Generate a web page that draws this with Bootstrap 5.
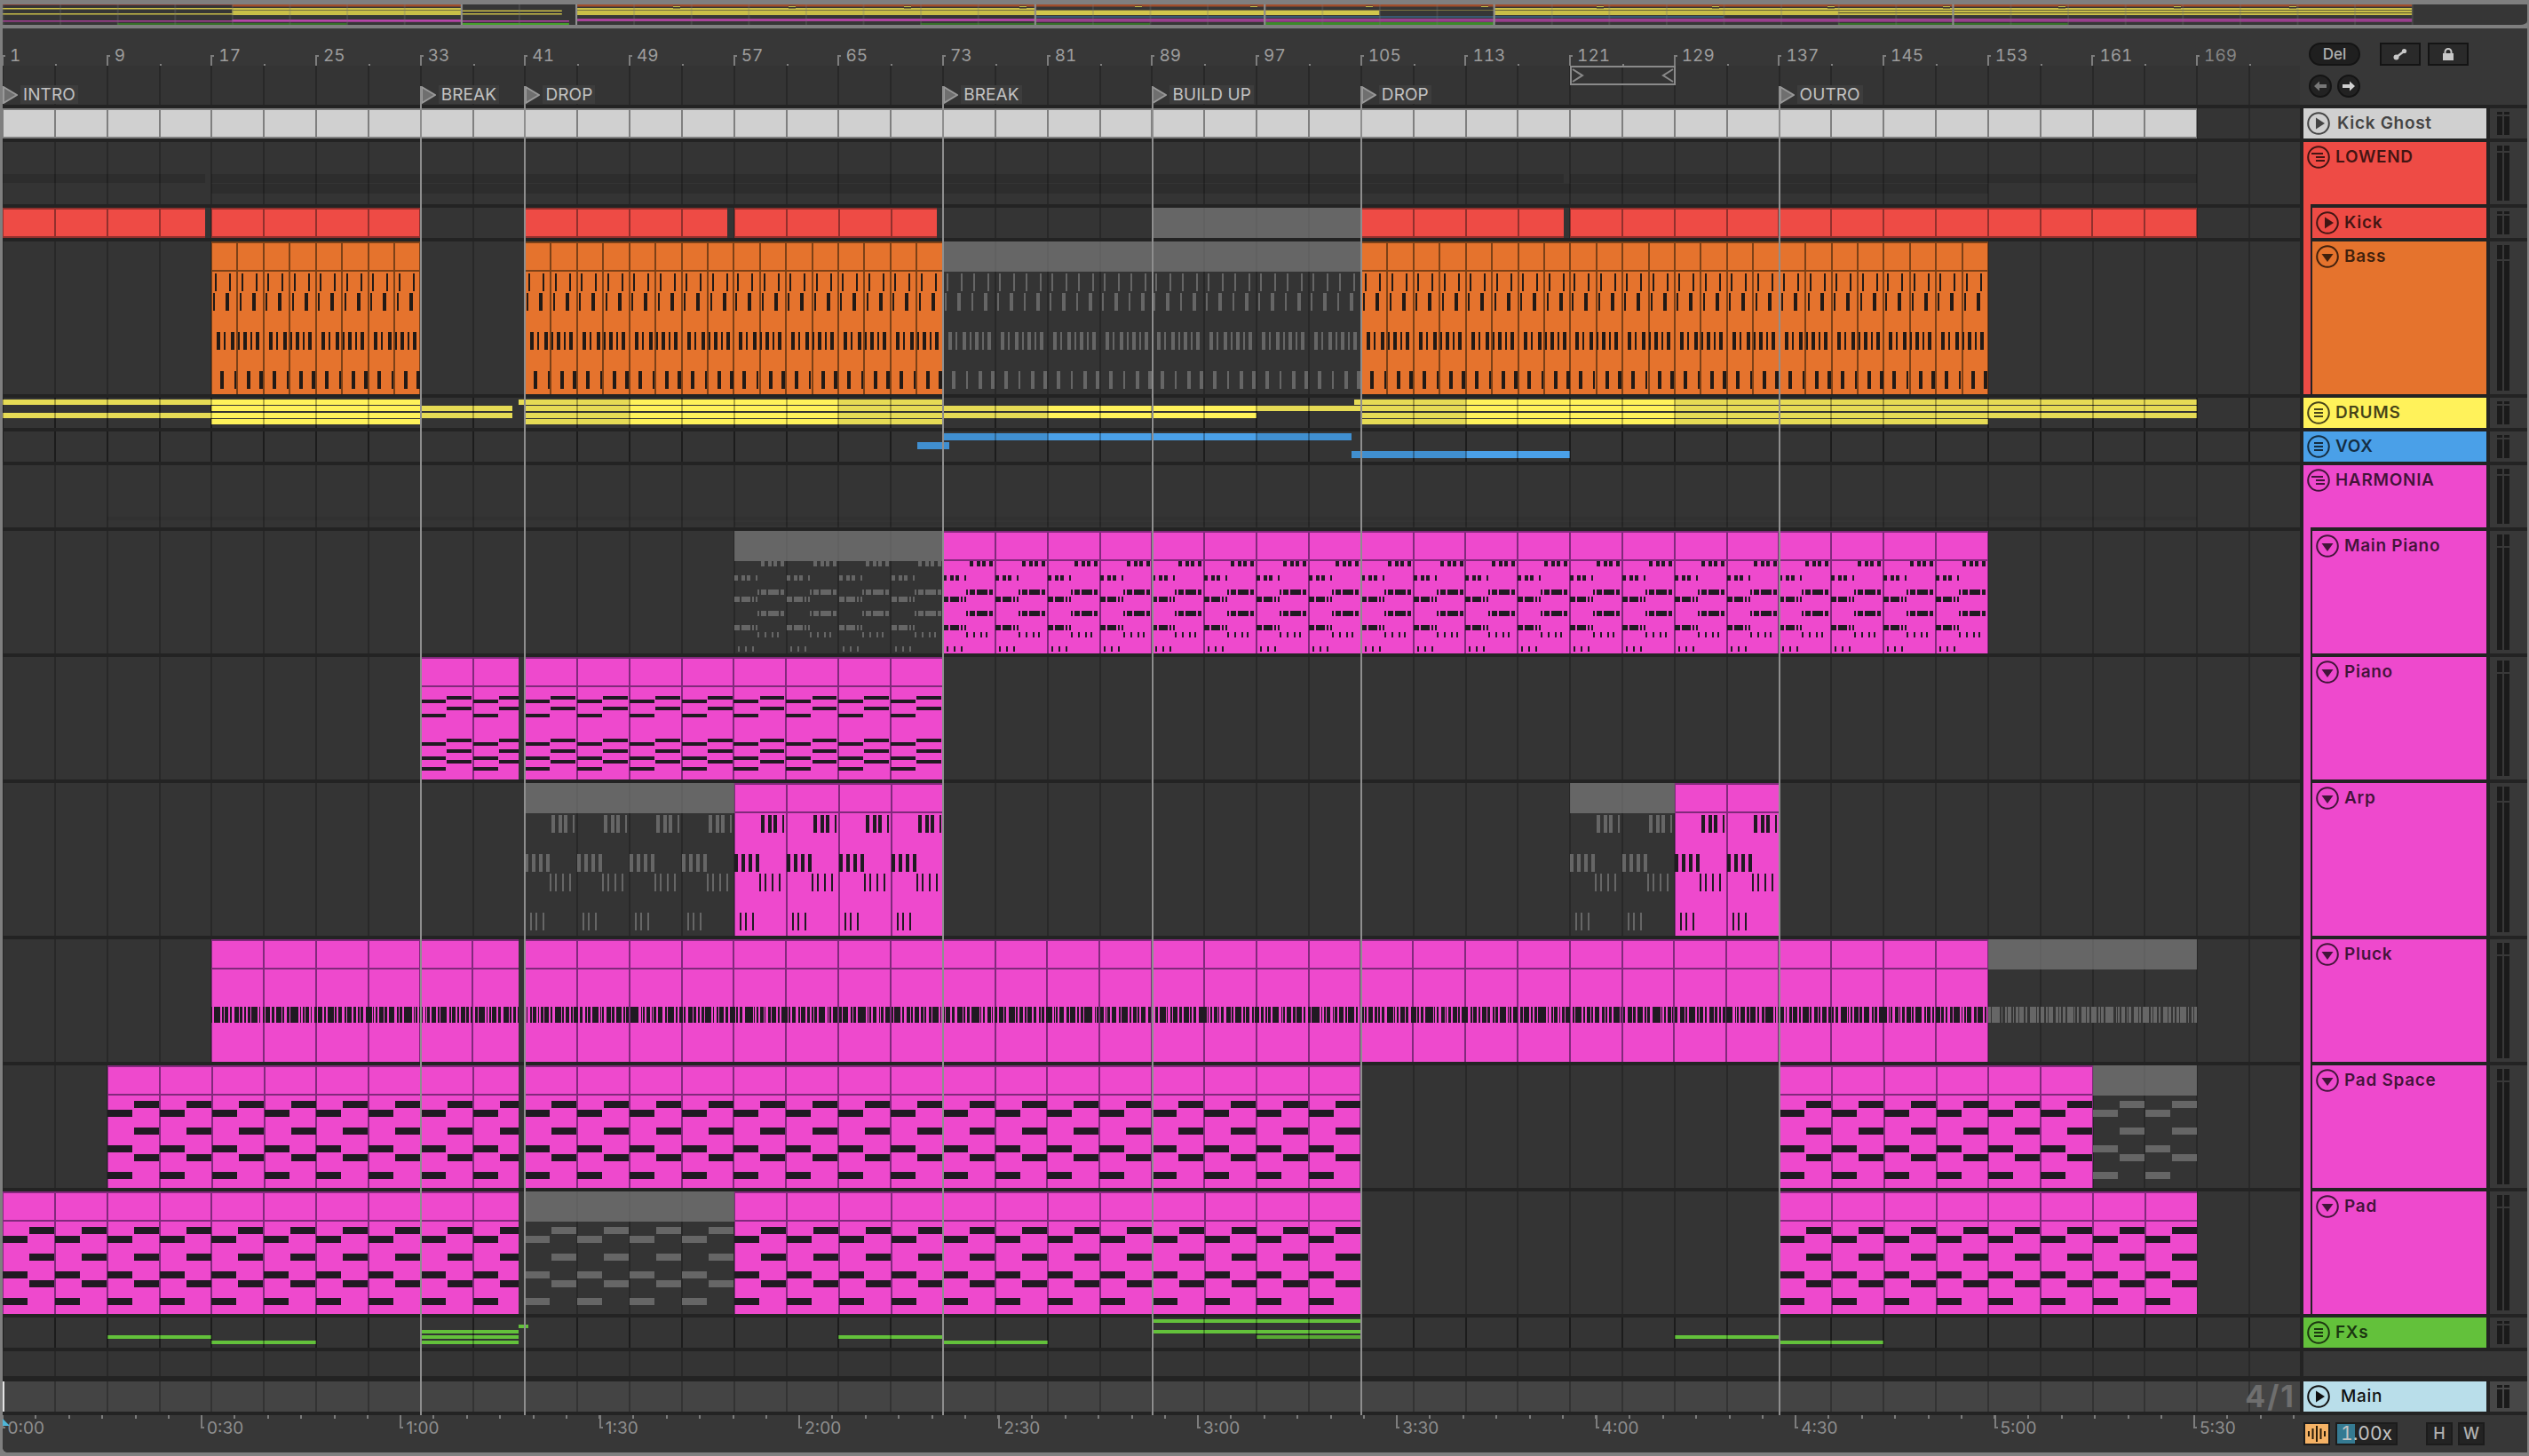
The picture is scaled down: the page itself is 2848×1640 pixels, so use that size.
<!DOCTYPE html>
<html lang="en">
<head>
<meta charset="utf-8">
<title>Arrangement</title>
<link href="https://cdn.jsdelivr.net/npm/bootstrap@5.3.0/dist/css/bootstrap.min.css" rel="stylesheet">
<style>
html,body{margin:0;background:#7f7f7f;overflow:hidden}
body{font-family:Inter,"Liberation Sans",sans-serif}
.shell{width:2848px;height:1640px;padding:5px 2px 4px 3px;background:#7f7f7f;overflow:hidden}
.ovw{height:27px;background:#363636;border-bottom:4px solid #7f7f7f;border-bottom-right-radius:8px;overflow:hidden}
.ovw svg{display:block}
.work{height:1604px;background:#232323;position:relative;border-bottom-left-radius:6px;overflow:hidden}
.tops{height:86px;background:#373737}
.leftcol{width:2587px;flex:none}
.rul{height:42px;overflow:hidden}
.rc{width:117.68px;flex:none;height:42px;color:#9d9d9d;font-size:19px;line-height:22px;font-variant-numeric:tabular-nums;background:linear-gradient(#808080,#808080) 58.84px 40px/2px 2px no-repeat}
.rc.dim{color:#858585}
.rt{display:block;width:4px;height:12px;border-left:2px solid #7d7d7d;border-top:2px solid #7d7d7d;margin-right:5px;margin-left:-1px;flex:none}
.mrk{height:44px;background-color:#343434;background-image:repeating-linear-gradient(90deg,#282828 -1px,#282828 1px,transparent 1px,transparent 57.84px);display:grid;grid-template-columns:var(--cols);grid-template-rows:22px 22px}
.mkr{grid-row:2;grid-column-end:span 50;justify-self:start;align-items:flex-start;white-space:nowrap}
.mkr svg{flex:none;display:block;margin-top:1px}
.mkl{margin-left:3px;padding:0 3px;height:21px;line-height:21px;background:#3d3d3d;color:#c2c2c2;font-size:19px;letter-spacing:.1px}
.brc{grid-row:1;display:block}
.ctl{padding:16px 0 0 10px}
.btn.pill{width:58px;height:26px;padding:0;border:2px solid #141414;border-radius:13px;background:#1f1f1f;color:#b0b0b0;font-size:17px;line-height:21px;font-weight:500}
.btn.sq{width:46px;height:26px;padding:0;border:2px solid #141414;border-radius:0;background:#2a2a2a;color:#ccc;line-height:0}
.btn.rnd{width:26px;height:26px;padding:0;border:2px solid #141414;border-radius:13px;background:#222;line-height:0}
.lane{width:2587px;flex:none;position:relative;background-color:#343434;background-image:repeating-linear-gradient(90deg,#282828 -1px,#282828 1px,transparent 1px,transparent 57.84px);display:grid;grid-template-columns:var(--cols);grid-template-rows:100%;overflow:hidden}
.lane-main{background-color:#444;background-image:repeating-linear-gradient(90deg,#333 -1px,#333 1px,transparent 1px,transparent 57.84px);box-shadow:inset 2px 0 0 #e4e4e4}
.lane-mix::after{content:"";position:absolute;inset:0;background-image:repeating-linear-gradient(90deg,rgba(0,0,0,.3) -1px,rgba(0,0,0,.3) 1px,transparent 1px,transparent 57.84px);pointer-events:none}
.clp{grid-row:1;height:100%;min-width:0;overflow:hidden;background-color:var(--f);background-image:repeating-linear-gradient(90deg,var(--l) calc(var(--x) - 1px),var(--l) calc(var(--x) + 1px),transparent calc(var(--x) + 1px),transparent calc(var(--x) - 1px + var(--p)))}
.clp svg{display:block}
.cap{height:34px;border-top:2px solid var(--l);border-bottom:2px solid var(--l)}
.k-pink{--f:#ee49cd;--l:#82297c;--n:#201a22}
.k-orange{--f:#e5732d;--l:#7c4117;--n:#221a16}
.k-red{--f:#ee4b45;--l:#92302d;--n:#222}
.k-white{--f:#d0d0d0;--l:#7f7f7f;--n:#222}
.k-gray{--f:transparent;--l:transparent;--n:#666}
.k-gray .cap{background:rgba(138,138,138,.586);border:0}
.bnd{grid-row:1;align-self:start;background:rgba(0,0,0,.13)}
.bnd2{background:rgba(0,0,0,.05)}
.nt{grid-row:1;align-self:start}
.y1{background:#fff25a}.y0{background:#e6db55}
.b1{background:#4aa0e8}.b0{background:#408fd0}
.g1{background:#63c13b}.g0{background:#58a834}
.hd{width:206px;flex:none;position:relative;color:rgba(0,0,0,.72);background:var(--c)}
.hl{height:34px;padding-left:4px}
.hd svg{width:26px;height:26px;flex:none;display:block}
.tn{font-size:19px;font-weight:600;letter-spacing:.7px;margin-left:6px;white-space:nowrap}
.hdc{background:linear-gradient(90deg,var(--pc) 8px,#232323 8px,#232323 10px,var(--c) 10px)}
.hdc::before{content:"";position:absolute;left:0;top:-4px;width:8px;height:4px;background:var(--pc)}
.hdc .hl{padding-left:14px}
.c-red{--c:#ee4b45}.c-orange{--c:#e5732d}.c-yellow{--c:#fff25a}.c-blue{--c:#4aa0e8}.c-pink{--c:#ee49cd}.c-green{--c:#63c13b}.c-light{--c:#d0d0d0}.c-main{--c:#b9deea}
.c-light{color:#444}.c-main{color:#111}
.p-red{--pc:#ee4b45}.p-pink{--pc:#ee49cd}
.mtr{width:42px;flex:none;background:#383838;padding:4px 20px 4px 8px;gap:2px}
.mtr-main{background:#474747}
.mb{flex:1 1 0;gap:2px}
.mb i{display:block;background:#1a1a1a;height:10%}
.mb b{display:block;background:#1a1a1a;flex:1 1 0}
.r34{height:34px}.r70{height:70px}.r172{height:172px}.r138{height:138px}.r28{height:28px}
.emp{width:252px;flex:none;background:#373737}
.gap6{margin-top:2px}
.lcl{position:absolute;top:65px;height:1497px;width:2px;background:#8e8e8e;z-index:3}
.sigl{position:absolute;right:5px;top:0;height:34px;line-height:34px;font-size:34px;letter-spacing:2px;font-weight:700;color:#6e6e6e;z-index:2}
.btm{height:42px;background:#373737}
.tcell{width:224.4px;flex:none;height:42px;color:#8e8e8e;font-size:19px;line-height:23px;background:repeating-linear-gradient(90deg,#7d7d7d 0,#7d7d7d 2px,transparent 2px,transparent 37.4px) 0 0/100% 4px no-repeat}
.tcell.endc{width:117.6px}
.tl{display:block;width:4px;height:15px;border-left:2px solid #7d7d7d;border-bottom:2px solid #7d7d7d;margin-right:3px;flex:none}
.ttxt{padding-top:3px}
.tclip{overflow:hidden;position:relative;margin-left:-1.4px;width:2588.4px}
.phd{position:absolute;left:1px;top:4px;width:0;height:0;border-left:8px solid #4fb6d8;border-top:8px solid transparent}
.ctr{padding:8px 0 0 4px;gap:6px}
.obtn{width:30px;height:26px;background:#f5b265;border:2px solid #1c1c1c;color:#2a1c08}
.spd{width:70px;height:26px;border:2px solid #1c1c1c;background:linear-gradient(90deg,#357a92 20px,#232323 20px);color:#c4c4c4;font-size:21px;line-height:22px;text-align:center;font-variant-numeric:tabular-nums}
.hw{width:30px;height:26px;border:2px solid #1c1c1c;background:#232323;color:#b0b0b0;font-size:18px;line-height:22px;text-align:center;font-weight:500}
</style>
</head>
<body>
<svg width="0" height="0" class="d-block" aria-hidden="true">
  <symbol id="ip" viewBox="0 0 26 26"><circle cx="13" cy="13" r="11.8" fill="none" stroke="currentColor" stroke-width="2"/><polygon points="10,6.5 20,13 10,19.5" fill="currentColor"/></symbol>
  <symbol id="id" viewBox="0 0 26 26"><circle cx="13" cy="13" r="11.8" fill="none" stroke="currentColor" stroke-width="2"/><polygon points="6.5,10 19.5,10 13,19" fill="currentColor"/></symbol>
  <symbol id="il" viewBox="0 0 26 26"><circle cx="13" cy="13" r="11.8" fill="none" stroke="currentColor" stroke-width="2"/><path d="M8 9h10M8 13h10M8 17h10" stroke="currentColor" stroke-width="2" fill="none"/></symbol>
  <symbol id="is" viewBox="0 0 26 26"><circle cx="13" cy="13" r="11.8" fill="none" stroke="currentColor" stroke-width="2"/><path d="M5 9h13M10 13h10M10 17h10" stroke="currentColor" stroke-width="2" fill="none"/></symbol>
</svg>
<div class="shell">
  <div class="ovw"><svg id="ov" width="2843" height="23"></svg></div>
  <div class="work">
    <div class="tops d-flex">
      <div class="leftcol">
        <div class="rul d-flex">
          <div class="rc d-flex align-items-end"><i class="rt"></i><span>1</span></div>
          <div class="rc d-flex align-items-end"><i class="rt"></i><span>9</span></div>
          <div class="rc d-flex align-items-end"><i class="rt"></i><span>17</span></div>
          <div class="rc d-flex align-items-end"><i class="rt"></i><span>25</span></div>
          <div class="rc d-flex align-items-end"><i class="rt"></i><span>33</span></div>
          <div class="rc d-flex align-items-end"><i class="rt"></i><span>41</span></div>
          <div class="rc d-flex align-items-end"><i class="rt"></i><span>49</span></div>
          <div class="rc d-flex align-items-end"><i class="rt"></i><span>57</span></div>
          <div class="rc d-flex align-items-end"><i class="rt"></i><span>65</span></div>
          <div class="rc d-flex align-items-end"><i class="rt"></i><span>73</span></div>
          <div class="rc d-flex align-items-end"><i class="rt"></i><span>81</span></div>
          <div class="rc d-flex align-items-end"><i class="rt"></i><span>89</span></div>
          <div class="rc d-flex align-items-end"><i class="rt"></i><span>97</span></div>
          <div class="rc d-flex align-items-end"><i class="rt"></i><span>105</span></div>
          <div class="rc d-flex align-items-end"><i class="rt"></i><span>113</span></div>
          <div class="rc d-flex align-items-end"><i class="rt"></i><span>121</span></div>
          <div class="rc d-flex align-items-end"><i class="rt"></i><span>129</span></div>
          <div class="rc d-flex align-items-end"><i class="rt"></i><span>137</span></div>
          <div class="rc d-flex align-items-end"><i class="rt"></i><span>145</span></div>
          <div class="rc d-flex align-items-end"><i class="rt"></i><span>153</span></div>
          <div class="rc d-flex align-items-end"><i class="rt"></i><span>161</span></div>
          <div class="rc dim d-flex align-items-end"><i class="rt"></i><span>169</span></div>
        </div>
        <div class="mrk" id="mrk">
          <div class="mkr d-flex" data-bar="1"><svg width="17" height="20"><polygon points="1,1 16,10 1,19" fill="#6f6f6f" stroke="#999" stroke-width="2"/></svg><span class="mkl">INTRO</span></div>
          <div class="mkr d-flex" data-bar="33"><svg width="17" height="20"><polygon points="1,1 16,10 1,19" fill="#6f6f6f" stroke="#999" stroke-width="2"/></svg><span class="mkl">BREAK</span></div>
          <div class="mkr d-flex" data-bar="41"><svg width="17" height="20"><polygon points="1,1 16,10 1,19" fill="#6f6f6f" stroke="#999" stroke-width="2"/></svg><span class="mkl">DROP</span></div>
          <div class="mkr d-flex" data-bar="73"><svg width="17" height="20"><polygon points="1,1 16,10 1,19" fill="#6f6f6f" stroke="#999" stroke-width="2"/></svg><span class="mkl">BREAK</span></div>
          <div class="mkr d-flex" data-bar="89"><svg width="17" height="20"><polygon points="1,1 16,10 1,19" fill="#6f6f6f" stroke="#999" stroke-width="2"/></svg><span class="mkl">BUILD UP</span></div>
          <div class="mkr d-flex" data-bar="105"><svg width="17" height="20"><polygon points="1,1 16,10 1,19" fill="#6f6f6f" stroke="#999" stroke-width="2"/></svg><span class="mkl">DROP</span></div>
          <div class="mkr d-flex" data-bar="137"><svg width="17" height="20"><polygon points="1,1 16,10 1,19" fill="#6f6f6f" stroke="#999" stroke-width="2"/></svg><span class="mkl">OUTRO</span></div>
          <svg class="brc" data-bar="121" width="119" height="22"><rect x="1" y="1" width="117" height="20" fill="none" stroke="#8a8a8a" stroke-width="2"/><path d="M3 4l11 7-11 7M116 4l-11 7 11 7" fill="none" stroke="#8a8a8a" stroke-width="2"/></svg>
        </div>
      </div>
      <div class="ctl">
        <div class="d-flex">
          <button class="btn pill" type="button">Del</button>
          <button class="btn sq" type="button" style="margin-left:22px"><svg width="18" height="16" viewBox="0 0 18 16"><path d="M5 11l8-6" stroke="#c8c8c8" stroke-width="2.5"/><circle cx="4.500" cy="11.500" r="3" fill="#c8c8c8"/><circle cx="13.500" cy="4.500" r="2.600" fill="#c8c8c8"/></svg></button>
          <button class="btn sq" type="button" style="margin-left:8px"><svg width="16" height="16" viewBox="0 0 16 16"><rect x="2" y="7" width="12" height="8" fill="#c8c8c8"/><path d="M4.500 7V5.500a3.500 3.500 0 0 1 7 0V7" fill="none" stroke="#c8c8c8" stroke-width="2"/></svg></button>
        </div>
        <div class="d-flex" style="margin-top:10px;gap:6px">
          <button class="btn rnd" type="button"><svg width="16" height="14" viewBox="0 0 16 14"><path d="M1 7l6-5.500V5h8v4H7v3.500z" fill="#777"/></svg></button>
          <button class="btn rnd" type="button"><svg width="16" height="14" viewBox="0 0 16 14"><path d="M15 7L9 1.500V5H1v4h8v3.500z" fill="#d0d0d0"/></svg></button>
        </div>
      </div>
    </div>

    <div class="d-flex flex-column gap-1 mt-1">
      <div class="d-flex gap-1 r34"><div class="lane" id="l-ghost"></div>
        <div class="hd c-light"><div class="hl d-flex align-items-center"><svg><use href="#ip"/></svg><span class="tn" style="margin-left:8px">Kick Ghost</span></div></div>
        <div class="mtr d-flex"><div class="mb d-flex flex-column"><i></i><b></b></div><div class="mb d-flex flex-column"><i></i><b></b></div></div></div>
      <div class="d-flex gap-1 r70"><div class="lane" id="l-lowend"></div>
        <div class="hd c-red"><div class="hl d-flex align-items-center"><svg><use href="#is"/></svg><span class="tn">LOWEND</span></div></div>
        <div class="mtr d-flex"><div class="mb d-flex flex-column"><i></i><b></b></div><div class="mb d-flex flex-column"><i></i><b></b></div></div></div>
      <div class="d-flex gap-1 r34"><div class="lane" id="l-kick"></div>
        <div class="hd hdc c-red p-red"><div class="hl d-flex align-items-center"><svg><use href="#ip"/></svg><span class="tn" style="margin-left:6px">Kick</span></div></div>
        <div class="mtr d-flex"><div class="mb d-flex flex-column"><i></i><b></b></div><div class="mb d-flex flex-column"><i></i><b></b></div></div></div>
      <div class="d-flex gap-1 r172"><div class="lane" id="l-bass"></div>
        <div class="hd hdc c-orange p-red"><div class="hl d-flex align-items-center"><svg><use href="#id"/></svg><span class="tn" style="margin-left:6px">Bass</span></div></div>
        <div class="mtr d-flex"><div class="mb d-flex flex-column"><i></i><b></b></div><div class="mb d-flex flex-column"><i></i><b></b></div></div></div>
      <div class="d-flex gap-1 r34"><div class="lane lane-mix" id="l-drums"></div>
        <div class="hd c-yellow"><div class="hl d-flex align-items-center"><svg><use href="#il"/></svg><span class="tn">DRUMS</span></div></div>
        <div class="mtr d-flex"><div class="mb d-flex flex-column"><i></i><b></b></div><div class="mb d-flex flex-column"><i></i><b></b></div></div></div>
      <div class="d-flex gap-1 r34"><div class="lane lane-mix" id="l-vox"></div>
        <div class="hd c-blue"><div class="hl d-flex align-items-center"><svg><use href="#il"/></svg><span class="tn">VOX</span></div></div>
        <div class="mtr d-flex"><div class="mb d-flex flex-column"><i></i><b></b></div><div class="mb d-flex flex-column"><i></i><b></b></div></div></div>
      <div class="d-flex gap-1 r70"><div class="lane" id="l-harm"></div>
        <div class="hd c-pink"><div class="hl d-flex align-items-center"><svg><use href="#is"/></svg><span class="tn">HARMONIA</span></div></div>
        <div class="mtr d-flex"><div class="mb d-flex flex-column"><i></i><b></b></div><div class="mb d-flex flex-column"><i></i><b></b></div></div></div>
      <div class="d-flex gap-1 r138"><div class="lane" id="l-mpiano"></div>
        <div class="hd hdc c-pink p-pink"><div class="hl d-flex align-items-center"><svg><use href="#id"/></svg><span class="tn" style="margin-left:6px">Main Piano</span></div></div>
        <div class="mtr d-flex"><div class="mb d-flex flex-column"><i></i><b></b></div><div class="mb d-flex flex-column"><i></i><b></b></div></div></div>
      <div class="d-flex gap-1 r138"><div class="lane" id="l-piano"></div>
        <div class="hd hdc c-pink p-pink"><div class="hl d-flex align-items-center"><svg><use href="#id"/></svg><span class="tn" style="margin-left:6px">Piano</span></div></div>
        <div class="mtr d-flex"><div class="mb d-flex flex-column"><i></i><b></b></div><div class="mb d-flex flex-column"><i></i><b></b></div></div></div>
      <div class="d-flex gap-1 r172"><div class="lane" id="l-arp"></div>
        <div class="hd hdc c-pink p-pink"><div class="hl d-flex align-items-center"><svg><use href="#id"/></svg><span class="tn" style="margin-left:6px">Arp</span></div></div>
        <div class="mtr d-flex"><div class="mb d-flex flex-column"><i></i><b></b></div><div class="mb d-flex flex-column"><i></i><b></b></div></div></div>
      <div class="d-flex gap-1 r138"><div class="lane" id="l-pluck"></div>
        <div class="hd hdc c-pink p-pink"><div class="hl d-flex align-items-center"><svg><use href="#id"/></svg><span class="tn" style="margin-left:6px">Pluck</span></div></div>
        <div class="mtr d-flex"><div class="mb d-flex flex-column"><i></i><b></b></div><div class="mb d-flex flex-column"><i></i><b></b></div></div></div>
      <div class="d-flex gap-1 r138"><div class="lane" id="l-pads"></div>
        <div class="hd hdc c-pink p-pink"><div class="hl d-flex align-items-center"><svg><use href="#id"/></svg><span class="tn" style="margin-left:6px">Pad Space</span></div></div>
        <div class="mtr d-flex"><div class="mb d-flex flex-column"><i></i><b></b></div><div class="mb d-flex flex-column"><i></i><b></b></div></div></div>
      <div class="d-flex gap-1 r138"><div class="lane" id="l-pad"></div>
        <div class="hd hdc c-pink p-pink"><div class="hl d-flex align-items-center"><svg><use href="#id"/></svg><span class="tn" style="margin-left:6px">Pad</span></div></div>
        <div class="mtr d-flex"><div class="mb d-flex flex-column"><i></i><b></b></div><div class="mb d-flex flex-column"><i></i><b></b></div></div></div>
      <div class="d-flex gap-1 r34"><div class="lane lane-mix" id="l-fx"></div>
        <div class="hd c-green"><div class="hl d-flex align-items-center"><svg><use href="#il"/></svg><span class="tn">FXs</span></div></div>
        <div class="mtr d-flex"><div class="mb d-flex flex-column"><i></i><b></b></div><div class="mb d-flex flex-column"><i></i><b></b></div></div></div>
      <div class="d-flex gap-1 r28"><div class="lane"></div><div class="emp"></div></div>
      <div class="d-flex gap-1 r34 gap6"><div class="lane lane-main"><span class="sigl">4/1</span></div>
        <div class="hd c-main"><div class="hl d-flex align-items-center"><svg><use href="#ip"/></svg><span class="tn" style="margin-left:12px;font-weight:500">Main</span></div></div>
        <div class="mtr mtr-main d-flex"><div class="mb d-flex flex-column"><i></i><b></b></div><div class="mb d-flex flex-column"><i></i><b></b></div></div></div>
    </div>

    <div class="btm d-flex mt-1">
      <div class="tclip d-flex flex-none">
        <i class="phd"></i>
        <div class="tcell d-flex"><i class="tl"></i><span class="ttxt">0:00</span></div>
        <div class="tcell d-flex"><i class="tl"></i><span class="ttxt">0:30</span></div>
        <div class="tcell d-flex"><i class="tl"></i><span class="ttxt">1:00</span></div>
        <div class="tcell d-flex"><i class="tl"></i><span class="ttxt">1:30</span></div>
        <div class="tcell d-flex"><i class="tl"></i><span class="ttxt">2:00</span></div>
        <div class="tcell d-flex"><i class="tl"></i><span class="ttxt">2:30</span></div>
        <div class="tcell d-flex"><i class="tl"></i><span class="ttxt">3:00</span></div>
        <div class="tcell d-flex"><i class="tl"></i><span class="ttxt">3:30</span></div>
        <div class="tcell d-flex"><i class="tl"></i><span class="ttxt">4:00</span></div>
        <div class="tcell d-flex"><i class="tl"></i><span class="ttxt">4:30</span></div>
        <div class="tcell d-flex"><i class="tl"></i><span class="ttxt">5:00</span></div>
        <div class="tcell endc d-flex"><i class="tl"></i><span class="ttxt">5:30</span></div>
      </div>
      <div class="ctr d-flex">
        <div class="obtn d-flex align-items-center justify-content-center"><svg width="22" height="20" viewBox="0 0 22 20"><path d="M2 7v6M6.500 4v12M11 1v18M15.500 4v12M20 7v6" stroke="currentColor" stroke-width="2" fill="none"/></svg></div>
        <div class="spd">1.00x</div>
        <div class="hw" style="margin-left:26px">H</div>
        <div class="hw">W</div>
      </div>
    </div>
    <div id="locs"></div>
  </div>
</div>
<script src="https://cdn.jsdelivr.net/npm/bootstrap@5.3.0/dist/js/bootstrap.bundle.min.js"></script>
<script>
var B=14.71,U=58.84;
/* grid tracks snapped to 1/64 px so that rounding does not accumulate along the timeline */
(function(){
  var a=[],prev=0;
  for(var i=1;i<=703;i++){var e=Math.round(i*B/4*64)/64;a.push((e-prev)+'px');prev=e}
  document.documentElement.style.setProperty('--cols',a.join(' '));
})();
function col(b){return Math.round((b-1)*4)+1}
function X(b){return (b-1)*B}
function notes(rows,s,e,bh){
  var out='',w=(e-s)*B,first=Math.floor((s-1)/4);
  for(var k=first;(k*4+1)<e;k++){
    var ux=X(k*4+1)-X(s);
    rows.forEach(function(r){r[2].forEach(function(p){
      if(ux+p[1]<=0||ux+p[0]>=w)return;
      out+='<rect x="'+(ux+p[0]).toFixed(2)+'" y="'+(r[0]-34)+'" width="'+(p[1]-p[0])+'" height="'+r[1]+'"/>';
    })});
  }
  return '<svg width="'+w.toFixed(1)+'" height="'+bh+'" fill="var(--n)" shape-rendering="crispEdges">'+out+'</svg>';
}
function clip(id,kind,s,e,rows,pb,bh){
  pb=pb||4;
  var d=document.createElement('div');
  d.className='clp k-'+kind;
  var off=(pb-((s-1)%pb))%pb;
  d.style.cssText='grid-column:'+col(s)+'/'+col(e)+';--x:'+(off*B).toFixed(2)+'px;--p:'+(pb*B).toFixed(2)+'px';
  d.innerHTML='<div class="cap"></div>'+(rows?notes(rows,s,e,bh):'');
  document.getElementById(id).appendChild(d);
}
function bar(id,cls,s,e,y,h){
  var d=document.createElement('div');
  d.className=cls;
  d.style.cssText='grid-column:'+col(s)+'/'+col(e)+';margin-top:'+y+'px;height:'+h+'px';
  document.getElementById(id).appendChild(d);
}
clip('l-ghost','white',1,169);
[[1,16.5],[17,33],[41,56.5],[57,72.5],[105,120.5],[121,169]].forEach(function(c){clip('l-kick','red',c[0],c[1])});
clip('l-kick','gray',89,105);
[[1,16.5],[17,120.5],[121,169]].forEach(function(c){bar('l-lowend','bnd',c[0],c[1],36,10)});
[[17,153]].forEach(function(c){bar('l-lowend','bnd',c[0],c[1],47,11)});
bar('l-harm','bnd bnd2',9,169,58,4);bar('l-harm','bnd bnd2',57,153,64,4);
var rBass=[[36,20,[[4,6],[20,22],[34,36],[50,52]]],[58,20,[[2,4],[16,20],[32,34],[46,50]]],
 [102,20,[[6,10],[14,16],[22,26],[30,32],[36,40],[44,46],[50,54]]],[146,20,[[10,14],[26,28],[40,44],[54,58]]]];
[['orange',17,33],['orange',41,73],['gray',73,105],['orange',105,153]].forEach(function(c){clip('l-bass',c[0],c[1],c[2],rBass,2,138)});
var Y=[2,9,17,24],YH=[6,6,5.5,6];
[[0,1,17,'y0'],[0,17,33,'y1'],[2,1,17,'y0'],[2,17,33,'y1'],[1,17,33,'y1'],[3,17,33,'y1'],
 [1,33,40,'y0'],[2,33,40,'y0'],[0,40.5,41,'y0'],
 [0,41,49,'y0'],[1,41,49,'y0'],[2,41,49,'y0'],[3,41,49,'y0'],
 [0,49,65,'y1'],[1,49,65,'y1'],[2,49,65,'y1'],[3,49,65,'y1'],
 [0,65,73,'y0'],[1,65,73,'y0'],[2,65,73,'y0'],[3,65,73,'y0'],
 [1,73,81,'y0'],[2,73,81,'y0'],[1,81,97,'y1'],[2,81,97,'y1'],[1,97,105,'y0'],[0,104.5,105,'y0'],
 [0,105,113,'y0'],[1,105,113,'y0'],[2,105,113,'y0'],[3,105,113,'y0'],
 [0,113,129,'y1'],[1,113,129,'y1'],[2,113,129,'y1'],[3,113,129,'y1'],
 [0,129,169,'y0'],[1,129,169,'y0'],[2,129,169,'y0'],[3,129,153,'y0']
].forEach(function(n){bar('l-drums','nt '+n[3],n[1],n[2],Y[n[0]],YH[n[0]])});
[[73,81,'b0',2],[81,97,'b1',2],[97,104.25,'b0',2],[71,73.5,'b0',12],[104.25,113,'b0',22],[113,121,'b1',22]]
 .forEach(function(n){bar('l-vox','nt '+n[2],n[0],n[1],n[3],8)});
var rMP=[[34,6,[[30,34],[38,42],[44,48],[52,56]]],[50,6,[[0,4],[8,12],[14,18],[24,26]]],
 [66,6,[[26,28],[30,36],[38,50],[52,56]]],[74,6,[[0,6],[8,18],[20,22],[24,26]]],
 [90,6,[[26,28],[30,36],[38,50],[52,56]]],[106,6,[[0,6],[8,18],[20,22],[24,26]]],
 [114,6,[[26,28],[34,36],[42,44],[48,50]]],[130,6,[[4,6],[12,14],[20,22]]]];
clip('l-mpiano','gray',57,73,rMP,4,104);clip('l-mpiano','pink',73,153,rMP,4,104);
var hA=[[0,28]],hB=[[29.4,57]];
var rPi=[[44,4,hB],[48,4,hA],[56,4,hB],[64,4,hA],[92,4,hB],[96,4,hA],[104,4,hB],[112,4,hA],[116,4,hB],[124,4,hA]];
clip('l-piano','pink',33,40.5,rPi,4,104);clip('l-piano','pink',41,73,rPi,4,104);
var rAr=[[36,20,[[30,34],[38,42],[44,48],[54,56]]],[80,20,[[0,4],[8,12],[16,20],[24,28]]],
 [102,20,[[28,30],[34,36],[42,44],[50,52]]],[146,20,[[6,8],[12,14],[20,22]]]];
[['gray',41,57],['pink',57,73],['gray',121,129],['pink',129,137]].forEach(function(c){clip('l-arp',c[0],c[1],c[2],rAr,4,138)});
var W=[2,5,3,2,3,7,1,2,5,3,6,2,3,9,1,2,4,1,3,5,2,7,2,4],G=[2,1,2,3,1,2,2,1,3,1,2,2,1,2,3,1,2];
var pl=[],px=1,pi=0;
while(px<2500){var w0=W[pi%W.length];pl.push([px,px+w0]);px+=w0+G[pi%G.length];pi++}
[['pink',17,40.5],['pink',41,153],['gray',153,169]].forEach(function(c){
  var d=document.createElement('div');d.className='clp k-'+c[0];
  var off=(4-((c[1]-1)%4))%4;
  d.style.cssText='grid-column:'+col(c[1])+'/'+col(c[2])+';--x:'+(off*B).toFixed(2)+'px;--p:'+U+'px';
  var w=(c[2]-c[1])*B,s='',o=X(c[1]);
  pl.forEach(function(p){var a=p[0]-o;if(a<w&&a+9>0)s+='<rect x="'+a.toFixed(1)+'" y="42" width="'+(p[1]-p[0])+'" height="18"/>'});
  d.innerHTML='<div class="cap"></div><svg width="'+w.toFixed(1)+'" height="104" fill="var(--n)" shape-rendering="crispEdges">'+s+'</svg>';
  document.getElementById('l-pluck').appendChild(d);
});
var pA=[[0,28]],pB=[[30,58]];
var rPd=[[40,8,pB],[50,8,pA],[70,8,pB],[90,8,pA],[100,8,pB],[120,8,pA]];
[['pink',9,40.5],['pink',41,105],['pink',137,161],['gray',161,169]].forEach(function(c){clip('l-pads',c[0],c[1],c[2],rPd,4,104)});
[['pink',1,40.5],['gray',41,57],['pink',57,105],['pink',137,169]].forEach(function(c){clip('l-pad',c[0],c[1],c[2],rPd,4,104)});
[[9,17,20,'g1'],[17,25,26,'g1'],[33,40.5,14,'g1'],[33,40.5,20,'g1'],[33,40.5,26,'g1'],[40.5,41.25,8,'g1'],
 [65,73,20,'g1'],[73,81,26,'g1'],[89,105,2,'g1'],[89,105,14,'g1'],[97,105,20,'g0'],
 [129,137,20,'g1'],[137,145,26,'g1']].forEach(function(n){bar('l-fx','nt '+n[3],n[0],n[1],n[2],4)});
document.querySelectorAll('#mrk [data-bar]').forEach(function(m){
  var c=col(+m.getAttribute('data-bar'));
  if(m.tagName==='svg')m.style.gridColumn=c+'/span 33';else m.style.gridColumnStart=c;
});
[33,41,73,89,105,137].forEach(function(b){
  var d=document.createElement('div');d.className='lcl';d.style.left=(X(b)-1).toFixed(1)+'px';
  document.getElementById('locs').appendChild(d);
});
(function(){
  function ox(b){return (b-1)*16.15}
  var s='';
  function r(a,b,y,h,c){s+='<rect x="'+ox(a).toFixed(1)+'" y="'+y+'" width="'+(ox(b)-ox(a)).toFixed(1)+'" height="'+h+'" fill="'+c+'"/>'}
  r(1,17,0,1,'#7d3a33');r(17,33,0,2.500,'#a04e2c');r(41,169,0,2.500,'#a04e2c');
  r(1,33,4,1.500,'#c9be48');r(1,33,10,1.500,'#c9be48');
  r(17,33,4,8,'#c9be48');r(17,33,6,1,'#7a7440');
  r(33,40,6.500,1.500,'#c9be48');r(33,40,10,1.500,'#c9be48');
  r(41,73,4,8,'#c9be48');r(41,73,6,1,'#7a7440');
  r(73,97,7,5,'#d2c74c');r(73,105,6,1,'#7a7440');
  r(105,169,4,8,'#c9be48');r(105,169,6,1,'#6a6538');r(129,169,9,1,'#55522e');
  r(73,105,13.500,1,'#3a7db0');r(105,121,13.500,1,'#3a7db0');
  r(1,33,18,1.500,'#a83f96');r(17,33,17,2.500,'#b545a8');r(33,40.500,18,1.500,'#b545a8');
  r(41,73,16,3,'#a8439a');r(57,169,16,1.500,'#b545a8');r(73,169,18,1.500,'#b03fa0');
  r(9,17,21,2,'#37702a');r(17,25,21,2,'#37702a');r(33,40.500,21,2,'#46a02c');r(65,81,21,2,'#37702a');r(89,105,20,3,'#3d8a2a');r(129,145,21,2,'#37702a');
  for(var x=755;x<2700;x+=130){
    if(x>505&&x<640)continue;
    s+='<rect x="'+x+'" y="1.500" width="8" height="3" fill="#333"/><rect x="'+x+'" y="2" width="8" height="1" fill="#c9be48"/>';
  }
  for(var b=1;b<=169;b+=4){s+='<rect x="'+(ox(b)-.5).toFixed(1)+'" y="0" width="2" height="23" fill="rgba(120,120,120,.28)"/>'}
  [33,41,73,89,105,137].forEach(function(b){s+='<rect x="'+(ox(b)-1).toFixed(1)+'" y="0" width="2" height="23" fill="#8e8e8e"/>'});
  document.getElementById('ov').innerHTML=s;
})();
</script>
</body>
</html>
